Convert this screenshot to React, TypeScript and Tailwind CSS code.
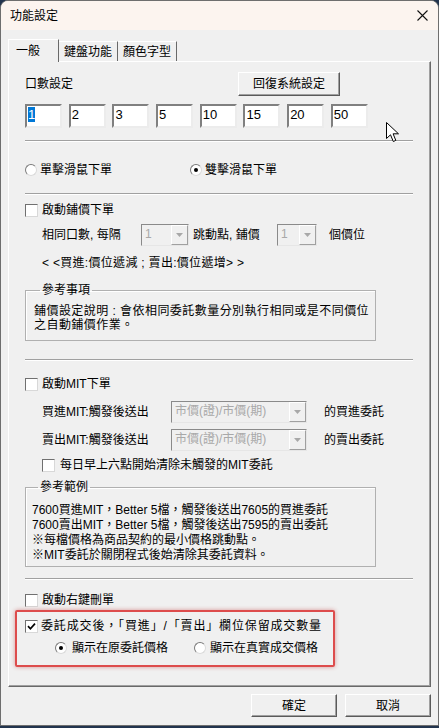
import React from 'react';

// 小元件：Windows 傳統樣式
const Check = ({ checked }: { checked?: boolean }) => (
  <span className="w-[13px] h-[13px] shrink-0 bg-white border border-t-[#707070] border-l-[#707070] border-r-[#d8d8d8] border-b-[#d8d8d8] flex items-center justify-center">
    {checked && (
      <svg width="9" height="9" viewBox="0 0 9 9">
        <path d="M1 4.2 L3.4 6.8 L8 1.6" stroke="#000" strokeWidth="1.7" fill="none" />
      </svg>
    )}
  </span>
);

const Radio = ({ on }: { on?: boolean }) => (
  <span className="w-[12px] h-[12px] shrink-0 rounded-full bg-white border border-t-[#7a7a7a] border-l-[#7a7a7a] border-r-[#dadada] border-b-[#dadada] flex items-center justify-center">
    {on && <span className="w-[4px] h-[4px] rounded-full bg-black" />}
  </span>
);

const Box = ({ v, sel }: { v: string; sel?: boolean }) => (
  <div className="w-[37px] h-[24px] shrink-0 bg-white border-2 border-t-[#808080] border-l-[#808080] border-r-[#ececec] border-b-[#ececec] pl-[1px] pt-[1px] text-[13px] leading-[16px]">
    {sel ? <span className="bg-[#0078d7] text-white">{v}</span> : v}
  </div>
);

const Combo = ({ w, v }: { w: string; v: string }) => (
  <div className={`${w} h-[22px] shrink-0 flex border border-t-[#8a8a8a] border-l-[#8a8a8a] border-r-[#e6e6e6] border-b-[#e6e6e6] bg-[#f0f0f0]`}>
    <div className="flex-1 pl-[3px] text-[#a8a8a8] leading-[19px] overflow-hidden whitespace-nowrap">{v}</div>
    <div className="w-[17px] h-full border border-t-white border-l-white border-r-[#a0a0a0] border-b-[#a0a0a0] flex items-center justify-center">
      <svg width="7" height="4" viewBox="0 0 7 4">
        <path d="M0 0 H7 L3.5 4 Z" fill="#a8a8a8" />
      </svg>
    </div>
  </div>
);

const Btn = ({ cls, children }: { cls: string; children: React.ReactNode }) => (
  <div className={`${cls} flex items-center justify-center bg-[#f0f0f0] border border-t-white border-l-white border-r-[#5a5a5a] border-b-[#5a5a5a] shadow-[inset_-1px_-1px_0_#a0a0a0]`}>
    {children}
  </div>
);

const Sep = ({ cls }: { cls: string }) => (
  <div className={`${cls} w-[388px] border-t border-t-[#a0a0a0] border-b border-b-white`} />
);

export default function App() {
  return (
    <div className="w-[439px] h-[728px] bg-[#22344e] font-['Liberation_Sans','Noto_Sans_CJK_TC',sans-serif] text-[12px] text-black">
      <div className="relative w-[439px] h-[726px] rounded-t-[8px] overflow-hidden border border-[#6e6e6e] bg-[#f0f0f0] flex flex-col">
        {/* 標題列 */}
        <div className="h-[29px] shrink-0 bg-[#fcf4ef] flex items-center justify-between pl-[9px] pr-[10px]">
          <span>功能設定</span>
          <svg width="11" height="11" viewBox="0 0 11 11">
            <path d="M0.5 0.5 L10.5 10.5 M10.5 0.5 L0.5 10.5" stroke="#111" strokeWidth="1.1" />
          </svg>
        </div>

        {/* 頁籤 */}
        <div className="flex items-end h-[22px] ml-[7px] mt-[9px] relative z-10">
          <div className="h-[23px] w-[51px] -mb-[1px] bg-[#f0f0f0] border-t border-l border-white border-r border-r-[#696969] flex items-center pl-[7px]">
            一般
          </div>
          <div className="h-[20px] w-[59px] border-t border-white border-r border-r-[#696969] flex items-center justify-center">
            鍵盤功能
          </div>
          <div className="h-[20px] w-[59px] border-t border-white border-r border-r-[#696969] flex items-center justify-center">
            顏色字型
          </div>
        </div>

        {/* 頁籤內容 */}
        <div className="ml-[7px] w-[423px] h-[626px] shrink-0 border border-t-white border-l-white border-r-[#696969] border-b-[#696969] shadow-[inset_-1px_-1px_0_#a0a0a0] pl-[16px] flex flex-col">
          <div className="mt-[10px] h-[24px] flex items-center">
            <span className="w-[213px]">口數設定</span>
            <Btn cls="w-[102px] h-[24px]">回復系統設定</Btn>
          </div>

          <div className="mt-[8px] flex gap-[6.7px]">
            <Box v="1" sel />
            <Box v="2" />
            <Box v="3" />
            <Box v="5" />
            <Box v="10" />
            <Box v="15" />
            <Box v="20" />
            <Box v="50" />
          </div>

          <Sep cls="mt-[12px]" />

          <div className="mt-[18px] h-[20px] flex items-center">
            <div className="w-[165px] flex items-center gap-[3px]">
              <Radio />
              <span>單擊滑鼠下單</span>
            </div>
            <div className="flex items-center gap-[3px]">
              <Radio on />
              <span>雙擊滑鼠下單</span>
            </div>
          </div>

          <Sep cls="mt-[13px]" />

          <div className="mt-[6px] h-[18px] flex items-center gap-[4px]">
            <Check />
            <span>啟動鋪價下單</span>
          </div>

          <div className="mt-[5px] h-[22px] flex items-center pl-[17px]">
            <span className="w-[99px]">相同口數, 每隔</span>
            <Combo w="w-[48px]" v="1" />
            <span className="w-[88px] pl-[4px]">跳動點, 鋪價</span>
            <Combo w="w-[40px]" v="1" />
            <span className="pl-[12px]">個價位</span>
          </div>

          <div className="mt-[9px] h-[16px] flex items-center pl-[17px] tracking-[0.3px]">
            &lt; &lt;買進:價位遞減 ; 賣出:價位遞增&gt; &gt;
          </div>

          <fieldset className="mt-[11px] w-[351px] border border-[#b0b0b0] shadow-[inset_1px_1px_0_#fff] pl-[8px] pb-[8px]">
            <legend className="ml-[6px] px-[2px] leading-[16px]">參考事項</legend>
            <div className="pt-[6px] leading-[14px] tracking-[0.45px]">
              鋪價設定說明 : 會依相同委託數量分別執行相同或是不同價位
              <br />
              之自動鋪價作業。
            </div>
          </fieldset>

          <Sep cls="mt-[18px]" />

          <div className="mt-[14px] h-[18px] flex items-center gap-[4px]">
            <Check />
            <span>啟動MIT下單</span>
          </div>

          <div className="mt-[8px] h-[22px] flex items-center pl-[17px]">
            <span className="w-[129px]">買進MIT:觸發後送出</span>
            <Combo w="w-[136px]" v="市價(證)/市價(期)" />
            <span className="pl-[17px]">的買進委託</span>
          </div>

          <div className="mt-[6px] h-[22px] flex items-center pl-[17px]">
            <span className="w-[129px]">賣出MIT:觸發後送出</span>
            <Combo w="w-[136px]" v="市價(證)/市價(期)" />
            <span className="pl-[17px]">的賣出委託</span>
          </div>

          <div className="mt-[5px] h-[18px] flex items-center gap-[5px] pl-[17px]">
            <Check />
            <span>每日早上六點開始清除未觸發的MIT委託</span>
          </div>

          <fieldset className="mt-[5px] w-[351px] border border-[#b0b0b0] shadow-[inset_1px_1px_0_#fff] pl-[6px] pb-[3px]">
            <legend className="ml-[6px] px-[2px] leading-[16px]">參考範例</legend>
            <div className="pt-[8px] leading-[15px]">
              7600買進MIT，Better 5檔，觸發後送出7605的買進委託
              <br />
              7600賣出MIT，Better 5檔，觸發後送出7595的賣出委託
              <br />
              ※每檔價格為商品契約的最小價格跳動點。
              <br />
              ※MIT委託於關閉程式後始清除其委託資料。
            </div>
          </fieldset>

          <Sep cls="mt-[11px]" />

          <div className="mt-[11px] h-[18px] flex items-center gap-[4px]">
            <Check />
            <span>啟動右鍵刪單</span>
          </div>

          <div className="mt-[1px] -ml-[10px] w-[320px] h-[57px] border-2 border-[#dd4c4c] rounded-[2px] shadow-[0_0_4px_rgba(190,40,40,0.45)] pl-[8px] pt-[5px] flex flex-col">
            <div className="h-[18px] flex items-center gap-[3px]">
              <Check checked />
              <span className="tracking-[0.85px]">委託成交後，「買進」/「賣出」欄位保留成交數量</span>
            </div>
            <div className="mt-[4px] h-[18px] flex items-center pl-[30px]">
              <div className="w-[139px] flex items-center gap-[5px]">
                <Radio on />
                <span>顯示在原委託價格</span>
              </div>
              <div className="flex items-center gap-[4px]">
                <Radio />
                <span>顯示在真實成交價格</span>
              </div>
            </div>
          </div>
        </div>

        {/* 按鈕 */}
        <div className="mt-[7px] flex justify-end gap-[8px] pr-[7px]">
          <Btn cls="w-[86px] h-[23px] border-[#3c3c3c]">確定</Btn>
          <Btn cls="w-[86px] h-[23px]">取消</Btn>
        </div>

        {/* 滑鼠游標 */}
        <svg className="absolute left-[385px] top-[121px]" width="14" height="21" viewBox="0 0 14 21">
          <path d="M0.5 0.5 L0.5 16.5 L4.5 12.8 L7.3 19.5 L9.8 18.4 L7.1 11.8 L12.5 11.8 Z" fill="#fff" stroke="#000" strokeWidth="1" strokeLinejoin="round" />
        </svg>
      </div>
    </div>
  );
}
